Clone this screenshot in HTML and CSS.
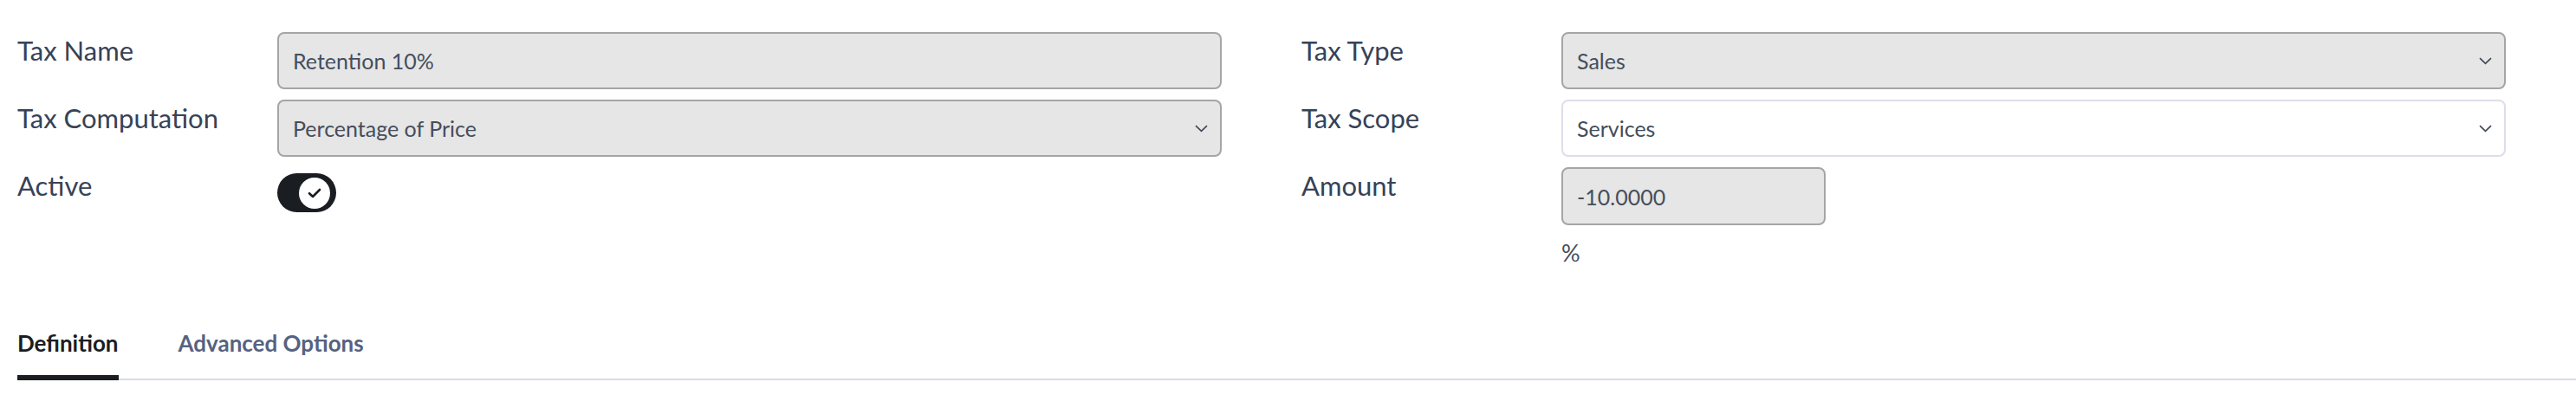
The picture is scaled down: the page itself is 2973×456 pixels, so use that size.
FILE: index.html
```html
<!DOCTYPE html>
<html lang="en">
<head>
<meta charset="utf-8">
<title>Tax</title>
<link rel="stylesheet" href="styles.css">
</head>
<body>
<div class="sheet">
  <div class="groups">
    <div class="group">
      <div class="label">Tax Name</div>
      <div class="field"><div class="input ro">Retention 10%</div></div>

      <div class="label">Tax Computation</div>
      <div class="field"><div class="input ro select">Percentage of Price
        <svg class="chev" width="15" height="9" viewBox="0 0 15 9"><path d="M1 1.2 L7.5 7.4 L14 1.2" fill="none" stroke="#3f4756" stroke-width="1.6"/></svg></div></div>

      <div class="label">Active</div>
      <div class="field"><div class="toggle"><span class="knob"><svg width="18" height="14" viewBox="0 0 18 14"><path d="M3 7.2 L7 11 L15 3" fill="none" stroke="#1a1d21" stroke-width="2.6" stroke-linecap="round" stroke-linejoin="round"/></svg></span></div></div>
    </div>

    <div class="group">
      <div class="label">Tax Type</div>
      <div class="field"><div class="input ro select">Sales
        <svg class="chev" width="15" height="9" viewBox="0 0 15 9"><path d="M1 1.2 L7.5 7.4 L14 1.2" fill="none" stroke="#3f4756" stroke-width="1.6"/></svg></div></div>

      <div class="label">Tax Scope</div>
      <div class="field"><div class="input rw select">Services
        <svg class="chev" width="15" height="9" viewBox="0 0 15 9"><path d="M1 1.2 L7.5 7.4 L14 1.2" fill="none" stroke="#3f4756" stroke-width="1.6"/></svg></div></div>

      <div class="label">Amount</div>
      <div class="field">
        <div class="input ro amount">-10.0000</div>
        <div class="unit">%</div>
      </div>
    </div>
  </div>

  <div class="tabs">
    <div class="tab active">Definition</div>
    <div class="tab">Advanced Options</div>
  </div>
</div>
</body>
</html>
```

FILE: styles.css
```css
html, body {
  margin: 0;
  padding: 0;
  background: #ffffff;
}

body {
  font-family: Lato, "Liberation Sans", sans-serif;
  color: #374256;
}

.sheet {
  padding: 37px 0 0 20px;
}

.groups {
  display: grid;
  grid-template-columns: 1390px 1390px;
  column-gap: 92px;
  align-items: start;
}

.group {
  display: grid;
  grid-template-columns: 300px 1090px;
  row-gap: 12px;
  align-items: start;
  align-content: start;
}

.label {
  font-size: 31px;
  line-height: 1.2;
  padding-top: 3px;
  color: #374256;
}

.field {
  display: flex;
  flex-direction: column;
  align-items: flex-start;
}

.input {
  box-sizing: border-box;
  width: 100%;
  height: 66px;
  border-radius: 8px;
  border: 2px solid #a4a5a5;
  background: #e5e6e5;
  display: flex;
  align-items: center;
  padding: 0 14px 0 16px;
  font-size: 25px;
  color: #454d5c;
}

.input.rw {
  background: #ffffff;
  border-color: #dcdfea;
}

.input.select {
  justify-content: space-between;
}

.input.amount {
  width: 305px;
  height: 67px;
}

.chev {
  display: block;
  flex: none;
}

.unit {
  margin-top: 12px;
  font-size: 27px;
  line-height: 39px;
  color: #454d5c;
}

.toggle {
  margin-top: 7px;
  width: 68px;
  height: 45px;
  border-radius: 23px;
  background: #1a1d21;
  display: flex;
  align-items: center;
  justify-content: flex-end;
  padding-right: 7px;
  box-sizing: border-box;
}

.knob {
  width: 36px;
  height: 36px;
  border-radius: 50%;
  background: #ffffff;
  display: flex;
  align-items: center;
  justify-content: center;
}

.knob svg {
  display: block;
}

.tabs {
  margin-top: 70px;
  display: flex;
  gap: 69px;
  border-bottom: 2px solid #d9dbe6;
}

.tab {
  font-size: 26px;
  font-weight: 700;
  line-height: 1.2;
  padding-bottom: 21px;
  color: #56627f;
  margin-bottom: -2px;
  border-bottom: 6px solid transparent;
}

.tab.active {
  color: #1b1d21;
  border-bottom-color: #1a1d21;
}
```
